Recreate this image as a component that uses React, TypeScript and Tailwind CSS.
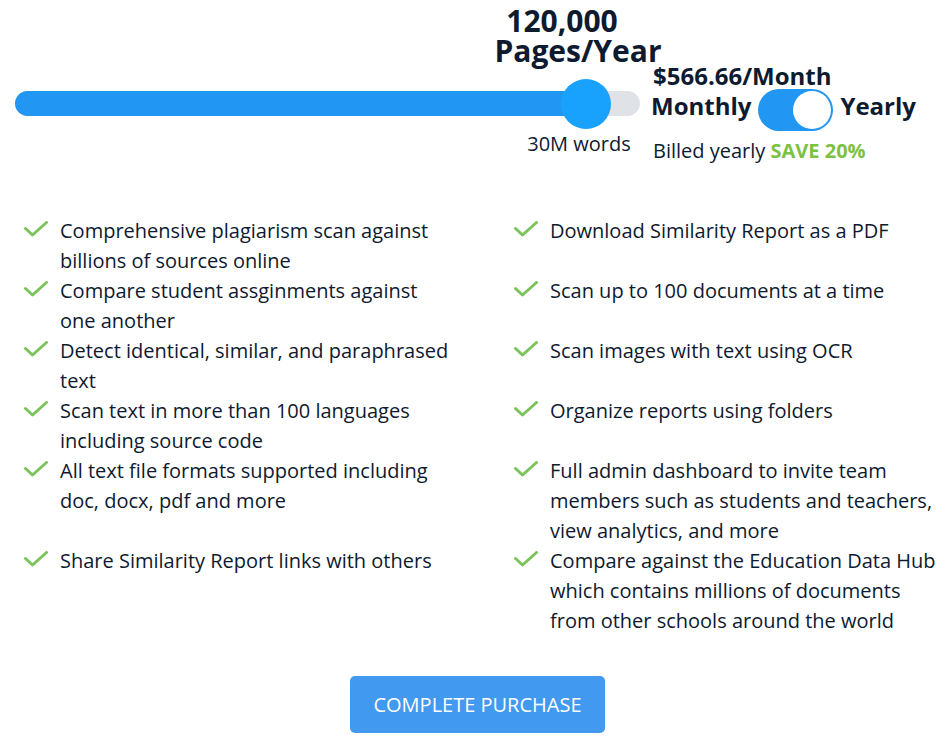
const features: [string, string][] = [
  ["Comprehensive plagiarism scan against billions of sources online", "Download Similarity Report as a PDF"],
  ["Compare student assginments against one another", "Scan up to 100 documents at a time"],
  ["Detect identical, similar, and paraphrased text", "Scan images with text using OCR"],
  ["Scan text in more than 100 languages including source code", "Organize reports using folders"],
  [
    "All text file formats supported including doc, docx, pdf and more",
    "Full admin dashboard to invite team members such as students and teachers, view analytics, and more",
  ],
  [
    "Share Similarity Report links with others",
    "Compare against the Education Data Hub which contains millions of documents from other schools around the world",
  ],
];

// slider position, as a share of the track
const progress = 571 / 625;

function Feature({ text }: { text: string }) {
  return (
    <div className="flex gap-[12px]">
      <svg viewBox="0 0 24 16" className="mt-[5px] h-[16px] w-[24px] shrink-0" fill="none">
        <path
          d="M1.5 7.5 8.5 14 22.5 1.5"
          stroke="#7dc35b"
          strokeWidth={3}
          strokeLinecap="round"
          strokeLinejoin="round"
        />
      </svg>
      <p className="max-w-[392px] text-[20px] leading-[30px]">{text}</p>
    </div>
  );
}

export default function App() {
  const pct = `${progress * 100}%`;

  return (
    <div
      className="min-h-[752px] w-[950px] bg-white text-[#0e1a2f]"
      style={{ fontFamily: "'Open Sans', 'Liberation Sans', sans-serif" }}
    >
      {/* ── Slider + plan ── */}
      <div className="flex">
        <div className="relative ml-[15px] mt-[91px] w-[625px]">
          <div className="relative h-[25px] rounded-full bg-[#dfe2e7]">
            <div className="h-full rounded-full bg-[#2196f3]" style={{ width: pct }} />
          </div>
          <div
            className="absolute top-[-12px] h-[50px] w-[50px] -translate-x-1/2 rounded-full bg-[#18a2fd]"
            style={{ left: pct }}
          />
          <div
            className="absolute top-[-85px] w-[230px] -translate-x-1/2 text-center text-[30px] font-bold leading-[30px]"
            style={{ left: `calc(${pct} - 8px)` }}
          >
            <div className="pr-[32px]">120,000</div>
            <div>Pages/Year</div>
          </div>
          <div
            className="absolute top-[39px] -translate-x-1/2 whitespace-nowrap text-[20px] leading-[28px]"
            style={{ left: `calc(${pct} - 7px)` }}
          >
            30M words
          </div>
        </div>

        <div className="ml-[11px] mt-[61px] flex flex-col">
          <div className="ml-[2px] text-[24px] font-bold leading-[30px]">$566.66/Month</div>
          <div className="mt-[-2px] flex items-center gap-[7px]">
            <span className="mb-[8px] text-[24px] font-bold leading-[30px]">Monthly</span>
            <span className="flex h-[42px] w-[75px] items-center justify-end rounded-full bg-[#2196f3] px-[2px]">
              <span className="h-[38px] w-[38px] rounded-full bg-white" />
            </span>
            <span className="mb-[8px] text-[24px] font-bold leading-[30px]">Yearly</span>
          </div>
          <div className="ml-[2px] mt-[6px] text-[20px] leading-[28px]">
            Billed yearly <span className="font-bold text-[#7dc142]">SAVE 20%</span>
          </div>
        </div>
      </div>

      {/* ── Features ── */}
      <div className="mt-[51px] grid grid-cols-[490px_1fr] pl-[24px]">
        {features.map(([left, right]) => (
          <div key={left} className="contents">
            <Feature text={left} />
            <Feature text={right} />
          </div>
        ))}
      </div>

      {/* ── Purchase ── */}
      <div className="mt-[40px] flex justify-center pl-[5px]">
        <button className="h-[57px] w-[255px] rounded-[5px] bg-[#4299f0] text-[20px] text-white">
          COMPLETE PURCHASE
        </button>
      </div>
    </div>
  );
}
